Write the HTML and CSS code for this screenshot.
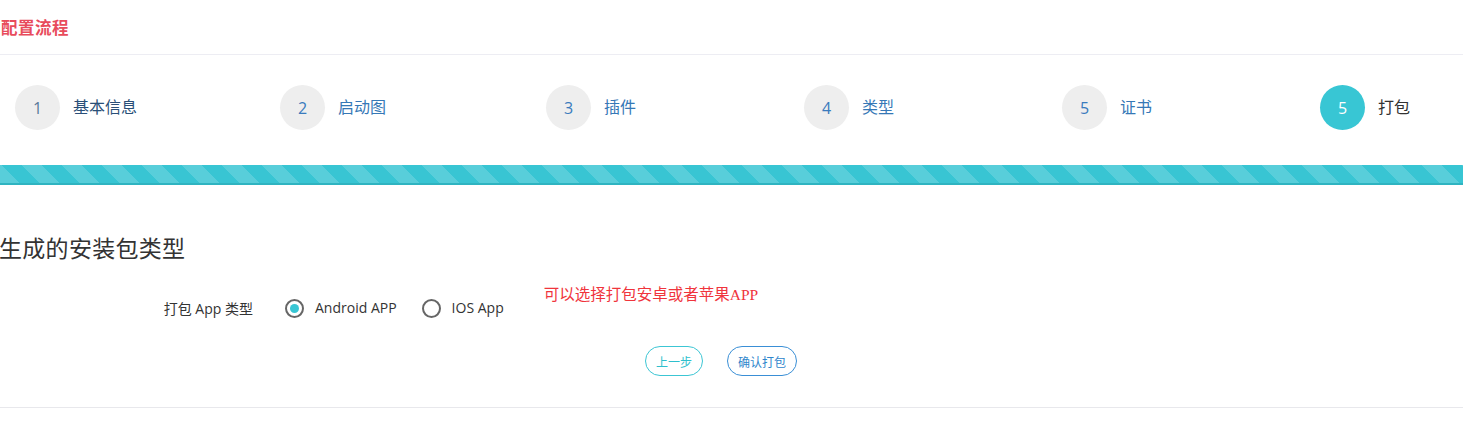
FILE: index.html
```html
<!DOCTYPE html>
<html lang="zh">
<head>
<meta charset="utf-8">
<title>配置流程</title>
<link rel="stylesheet" href="styles.css">
</head>
<body>
<header class="page-head">
  <h1 class="page-title">配置流程</h1>
</header>

<ol class="steps">
  <li class="step step-done"><span class="step-num">1</span><span class="step-label">基本信息</span></li>
  <li class="step"><span class="step-num">2</span><span class="step-label">启动图</span></li>
  <li class="step"><span class="step-num">3</span><span class="step-label">插件</span></li>
  <li class="step"><span class="step-num">4</span><span class="step-label">类型</span></li>
  <li class="step"><span class="step-num">5</span><span class="step-label">证书</span></li>
  <li class="step step-active"><span class="step-num">5</span><span class="step-label">打包</span></li>
</ol>

<div class="progress"></div>

<section class="panel">
  <h2 class="panel-title">生成的安装包类型</h2>

  <div class="form-row">
    <div class="form-label">打包 App 类型</div>
    <div class="radios">
      <label class="radio"><span class="radio-dot radio-on"></span>Android APP</label>
      <label class="radio"><span class="radio-dot"></span>IOS App</label>
    </div>
    <div class="hint">可以选择打包安卓或者苹果APP</div>
  </div>

  <div class="actions">
    <button class="btn btn-prev" type="button">上一步</button>
    <button class="btn btn-ok" type="button">确认打包</button>
  </div>
</section>
</body>
</html>
```

FILE: styles.css
```css
* { box-sizing: border-box; }

body {
  margin: 0;
  background: #fff;
  font-family: "Open Sans", "Noto Sans CJK SC", sans-serif;
  color: #333;
}

.page-head {
  height: 55px;
  border-bottom: 1px solid #ededf3;
  display: flex;
  align-items: center;
  padding-left: 1px;
}

.page-title {
  margin: 0;
  font-family: "Noto Sans CJK SC", sans-serif;
  font-size: 16.5px;
  font-weight: 700;
  color: #e84c5c;
  line-height: 1;
  letter-spacing: 0.5px;
}

.steps {
  list-style: none;
  margin: 30px 0 0;
  padding: 0;
  display: grid;
  grid-template-columns: 265px 266px 258px 258px 258px 1fr;
}

.step {
  display: flex;
  align-items: center;
  gap: 13px;
  padding-left: 15px;
  height: 45px;
}

.step-num {
  width: 45px;
  height: 45px;
  border-radius: 50%;
  background: #eeeeee;
  color: #3a7bbd;
  display: flex;
  align-items: center;
  justify-content: center;
  font-size: 16px;
}

.step-label {
  font-family: "Noto Sans CJK SC", sans-serif;
  font-size: 16px;
  line-height: 20px;
  margin-top: -3px;
  color: #3678b6;
}

.step-done .step-num { color: #5a7a9a; }
.step-done .step-label { color: #2a4f78; }

.step-active .step-num {
  background: #38c6d4;
  color: #fff;
}
.step-active .step-label { color: #333; }

.progress {
  margin-top: 35px;
  height: 20px;
  background-color: #38c5d3;
  background-image: repeating-linear-gradient(45deg,
    rgba(255,255,255,.16) 0, rgba(255,255,255,.16) 14.14px,
    transparent 14.14px, transparent 28.28px);
  border-bottom: 2px solid #2fb4c1;
}

.panel {
  border-bottom: 1px solid #e8e8ec;
  padding-bottom: 31px;
}

.panel-title {
  margin: 46px 0 0;
  font-family: "Noto Sans CJK SC", sans-serif;
  font-weight: 400;
  font-size: 23px;
  line-height: 32px;
  letter-spacing: 0.3px;
  color: #333;
  margin-left: -1px;
}

.form-row {
  margin-top: 24px;
  display: flex;
  align-items: flex-start;
  height: 38px;
}

.form-label {
  width: 253px;
  text-align: right;
  font-family: "Open Sans", "Noto Sans CJK SC", sans-serif;
  font-size: 14px;
  line-height: 20px;
  margin-top: 12px;
  color: #333;
}

.radios {
  display: flex;
  gap: 25px;
  margin-left: 32px;
  margin-top: 11px;
}

.radio {
  display: flex;
  align-items: center;
  gap: 11px;
  font-size: 14px;
  line-height: 20px;
  color: #333;
}

.radio-dot {
  width: 19px;
  height: 19px;
  border-radius: 50%;
  border: 2px solid #666;
  display: flex;
  align-items: center;
  justify-content: center;
}

.radio-on::after {
  content: "";
  width: 9px;
  height: 9px;
  border-radius: 50%;
  background: #38c6d4;
}

.hint {
  margin-left: 40px;
  margin-top: -2px;
  font-family: "Liberation Serif", "Noto Sans CJK SC", serif;
  font-size: 15.5px;
  line-height: 20px;
  color: #f0343c;
}

.actions {
  display: flex;
  gap: 24px;
  margin-top: 21px;
  padding-left: 645px;
}

.btn {
  height: 30px;
  padding: 0 4px;
  border-radius: 15px;
  background: #fff;
  font-family: "Noto Sans CJK SC", sans-serif;
  font-size: 12px;
  cursor: pointer;
}

.btn-prev {
  width: 58px;
  border: 1px solid #3cc6d4;
  color: #2fbfcd;
}

.btn-ok {
  width: 70px;
  border: 1px solid #3a8fd6;
  color: #2f86cc;
}
```
